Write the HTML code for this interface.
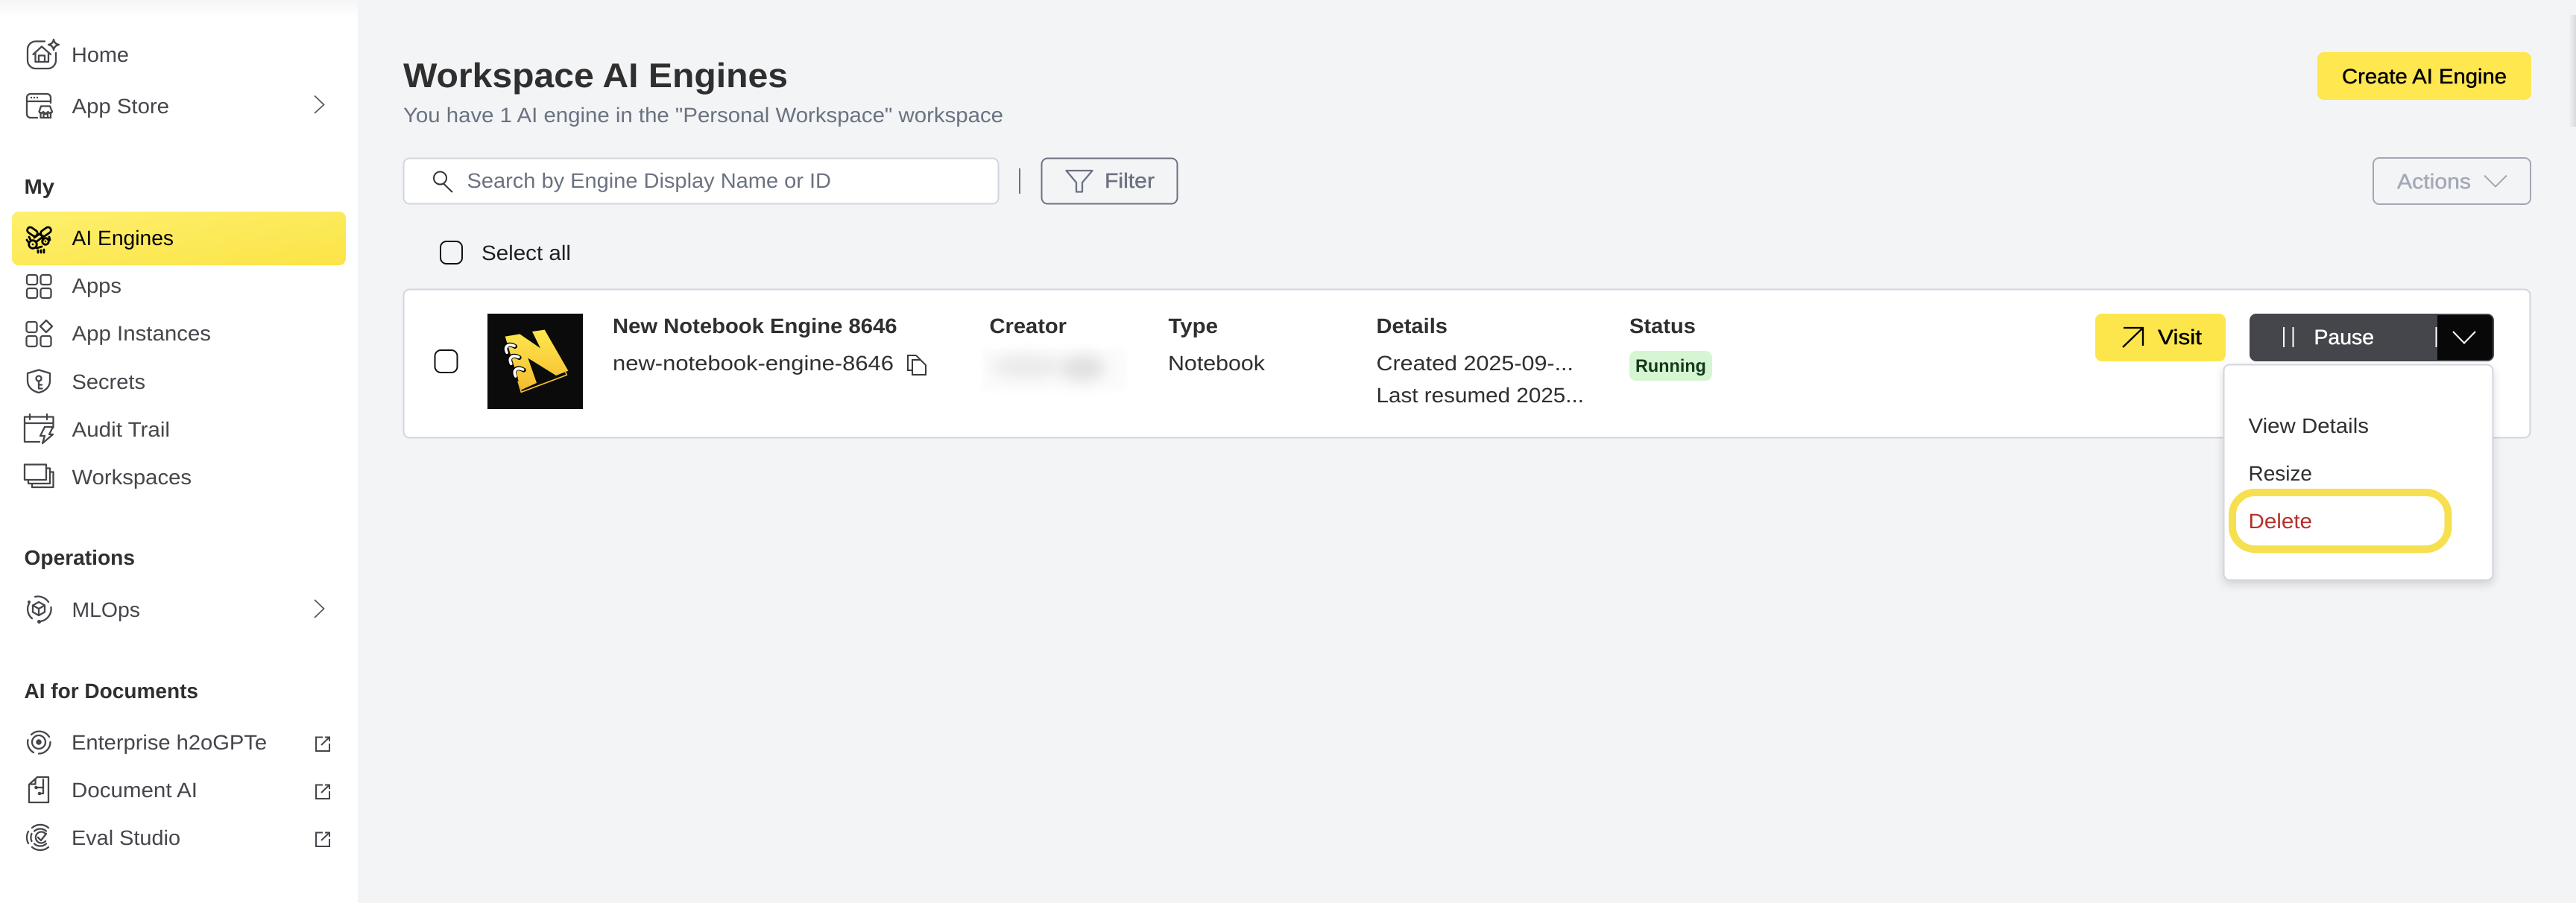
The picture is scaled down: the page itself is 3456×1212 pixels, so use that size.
<!DOCTYPE html>
<html lang="en">
<head>
<meta charset="utf-8">
<title>Workspace AI Engines</title>
<style>
html,body{margin:0;padding:0;width:3456px;height:1212px;overflow:hidden;background:#F3F4F6}
svg{display:block}
text{font-family:"Liberation Sans",sans-serif;font-size:28px;text-rendering:geometricPrecision}
.s{fill:#45464B}
.b{font-weight:700;fill:#2F2F2F}
.m{stroke-width:.45px}
.i{fill:none;stroke:#45464B;stroke-width:2.3;stroke-linejoin:round;stroke-linecap:round}
</style>
</head>
<body>
<svg xmlns="http://www.w3.org/2000/svg" width="3456" height="1212" viewBox="0 0 3456 1212">
<defs>
<linearGradient id="hl" x1="0" y1="0" x2="1" y2="1"><stop offset="0" stop-color="#FEF06E"/><stop offset="1" stop-color="#FBE447"/></linearGradient>
<linearGradient id="top" x1="0" y1="0" x2="0" y2="1"><stop offset="0" stop-color="#F5F5F5"/><stop offset="1" stop-color="#FFFFFF"/></linearGradient>
<linearGradient id="edge" x1="0" y1="0" x2="1" y2="0"><stop offset="0" stop-color="#F3F4F6"/><stop offset="1" stop-color="#DADADC"/></linearGradient>
<linearGradient id="nb" x1="0" y1="0" x2="0" y2="1"><stop offset="0" stop-color="#FFE84F"/><stop offset="1" stop-color="#F4BC2E"/></linearGradient>
<filter id="sh" x="-10%" y="-10%" width="120%" height="120%"><feDropShadow dx="0" dy="5" stdDeviation="6" flood-color="#000" flood-opacity=".14"/></filter>
</defs>

<!-- page -->
<rect width="3456" height="1212" fill="#F3F4F6"/>
<rect x="3446" y="20" width="10" height="150" fill="url(#edge)"/>

<!-- sidebar -->
<rect width="480" height="1212" fill="#FFFFFF"/>
<rect width="480" height="22" fill="url(#top)"/>

<!-- home -->
<g class="i">
<path d="M60,55.500 H48 a11,11 0 0 0 -11,11 V81 a11,11 0 0 0 11,11 H64 a11,11 0 0 0 11,-11 V71"/>
<path d="M72,53 Q73,59 79,60 Q73,61 72,67 Q71,61 65,60 Q71,59 72,53Z"/>
<path d="M44.500,73 L56,62.500 L68,73 M47.500,71 V83 H65 V71 M52,83 V74.500 H60 V83"/>
</g>
<text class="s" x="96" y="83" textLength="77" lengthAdjust="spacingAndGlyphs">Home</text>

<!-- app store -->
<g class="i">
<path d="M50,158 H41 a5,5 0 0 1 -5,-5 V131 a5,5 0 0 1 5,-5 H63 a5,5 0 0 1 5,5 V138 M36,136 H68"/>
<path d="M52.500,150 L55,142.500 H67 L70,150 Q67,154 64.500,150 Q61,154 58,150 Q55,154 52.500,150Z M54.500,151 V158 H68 V151 M58.500,158 V153 H64 V158"/>
</g>
<circle cx="42" cy="131" r="1.200" fill="#45464B"/><circle cx="46" cy="131" r="1.200" fill="#45464B"/><circle cx="50" cy="131" r="1.200" fill="#45464B"/>
<text class="s" x="96.500" y="152" textLength="130.500" lengthAdjust="spacingAndGlyphs">App Store</text>
<path d="M422,128.500 L434.500,140.500 L422,152" fill="none" stroke="#555" stroke-width="1.700"/>

<text class="b" x="32.500" y="260" textLength="40.500" lengthAdjust="spacingAndGlyphs">My</text>

<!-- AI engines -->
<rect x="16" y="284" width="448" height="72" rx="9" fill="url(#hl)"/>
<g fill="none" stroke="#000" stroke-width="2.800" stroke-linejoin="round" stroke-linecap="round">
<rect x="36" y="307" width="15" height="8" rx="4" transform="rotate(35 43.500 311)"/>
<rect x="54" y="307" width="15" height="8" rx="4" transform="rotate(-35 61.500 311)"/>
<path d="M46,319 L53,314 L58,318 M41,322 L39,318 M66,318 L67,322 M48,325 L56,319 L58,322 M49,333 L56,331 M38,325 L36,322"/>
<circle cx="44" cy="328" r="5.300"/>
<circle cx="61" cy="324" r="4.300"/>
<path d="M51,336 V339 M55,336 V339 M59,335 V339"/>
</g>
<circle cx="44" cy="328" r="1.300" fill="#000"/><circle cx="61" cy="324" r="1.200" fill="#000"/>
<text x="96.500" y="329" fill="#000" textLength="136.500" lengthAdjust="spacingAndGlyphs">AI Engines</text>

<!-- apps -->
<g class="i">
<rect x="36" y="369" width="14" height="13" rx="3"/><rect x="54.500" y="369" width="14" height="13" rx="3"/>
<rect x="36" y="387" width="14" height="13" rx="3"/><rect x="54.500" y="387" width="14" height="13" rx="3"/>
</g>
<text class="s" x="96.500" y="393" textLength="66.500" lengthAdjust="spacingAndGlyphs">Apps</text>

<!-- app instances -->
<g class="i">
<rect x="35.500" y="432" width="14" height="14" rx="3"/>
<path d="M62,430 L70,438 L62,446 L54,438 Z"/>
<rect x="35.500" y="451" width="14" height="14" rx="3"/><rect x="54.500" y="451" width="14" height="14" rx="3"/>
</g>
<text class="s" x="96.500" y="457" textLength="186.500" lengthAdjust="spacingAndGlyphs">App Instances</text>

<!-- secrets -->
<g class="i">
<path d="M52,496.500 L67,501 V511 C67,520 60,525 52,527 C44,525 37,520 37,511 V501 Z"/>
<circle cx="52" cy="508" r="3.500"/>
<path d="M52,511.500 V521.500 H56.500 M52,516.500 H56"/>
</g>
<text class="s" x="96.500" y="522" textLength="98.500" lengthAdjust="spacingAndGlyphs">Secrets</text>

<!-- audit trail -->
<g class="i" stroke-linecap="butt" stroke-linejoin="miter">
<path d="M53,593 H33 V559.500 H71.500 V568 H33 M71.500,568 V574 M40,556 V563 M63,556 V563"/>
<path d="M60,573 H71 L66,583 H71 L57,595 L60,585 H54 Z"/>
</g>
<text class="s" x="96.500" y="586" textLength="131.500" lengthAdjust="spacingAndGlyphs">Audit Trail</text>

<!-- workspaces -->
<g class="i" stroke-linecap="butt" stroke-linejoin="miter">
<rect x="33" y="623.500" width="29" height="20.500"/>
<path d="M38,644 V649 H67 V628.500 H62 M43,649 V654 H71.500 V633.500 H67"/>
</g>
<text class="s" x="96.500" y="650" textLength="160.500" lengthAdjust="spacingAndGlyphs">Workspaces</text>

<text class="b" x="32.500" y="758" textLength="148.500" lengthAdjust="spacingAndGlyphs">Operations</text>

<!-- mlops -->
<g class="i">
<path d="M39,810 A16,16 0 0 0 43,830 M47,801 A17,17 0 0 1 65,808 M68.500,815 A17,17 0 0 1 54,834"/>
<path d="M52,808 L60,812.500 V821.500 L52,826 L44,821.500 V812.500 Z M44,812.500 L52,817 L60,812.500 M52,817 V826"/>
</g>
<circle cx="52.500" cy="834.500" r="2.500" fill="#45464B"/>
<circle cx="39" cy="808" r="2" fill="#45464B"/>
<text class="s" x="96.500" y="828" textLength="91.500" lengthAdjust="spacingAndGlyphs">MLOps</text>
<path d="M422,805 L434.500,817 L422,829" fill="none" stroke="#555" stroke-width="1.700"/>

<text class="b" x="32.500" y="937" textLength="233.500" lengthAdjust="spacingAndGlyphs">AI for Documents</text>

<!-- enterprise -->
<g class="i">
<path d="M42,986 A15.500,15.500 0 0 1 66,989 M67.500,996 A15.500,15.500 0 0 1 52,1011.500 M45,1010 A15.500,15.500 0 0 1 37.500,993"/>
<circle cx="52" cy="996" r="9"/>
</g>
<circle cx="52" cy="996" r="3.800" fill="#45464B"/>
<text class="s" x="96" y="1006" textLength="262" lengthAdjust="spacingAndGlyphs">Enterprise h2oGPTe</text>

<!-- document ai -->
<g class="i" stroke-linecap="butt">
<path d="M50,1043 H65 V1077 H39 V1053 Z M47.500,1045.500 V1052.500 H41"/>
<path d="M49,1057 H58 V1046 M58,1057 V1065 H53"/>
</g>
<circle cx="48.500" cy="1057" r="2.300" fill="#45464B"/><circle cx="53" cy="1065" r="2.300" fill="#45464B"/>
<text class="s" x="96" y="1070" textLength="169" lengthAdjust="spacingAndGlyphs">Document AI</text>

<!-- eval studio -->
<g class="i" stroke-linecap="butt">
<path d="M43,1111 A17,17 0 0 1 65,1111 M46,1115.500 A12,12 0 0 1 62,1115.500 M43,1137 A17,17 0 0 0 65,1137 M46,1132.500 A12,12 0 0 0 62,1132.500"/>
<path d="M38,1116 A17,17 0 0 0 38,1132 M42.500,1119 A12,12 0 0 0 42.500,1129"/>
<path d="M61,1119 A7.500,7.500 0 1 0 61,1129"/>
<path d="M51,1124 L55,1128 L62,1119"/>
</g>
<text class="s" x="96" y="1134" textLength="146" lengthAdjust="spacingAndGlyphs">Eval Studio</text>

<!-- external link icons -->
<g fill="none" stroke="#45464B" stroke-width="2">
<path d="M433,989.500 H424 V1008 H442 V998 M431,1000 L442,989.500 M436,989.500 H442 V995"/>
<path d="M433,1053.500 H424 V1072 H442 V1062 M431,1064 L442,1053.500 M436,1053.500 H442 V1059"/>
<path d="M433,1117.500 H424 V1136 H442 V1126 M431,1128 L442,1117.500 M436,1117.500 H442 V1123"/>
</g>

<!-- header -->
<text x="541" y="117" font-weight="700" fill="#2F2F2F" style="font-size:46px" textLength="516" lengthAdjust="spacingAndGlyphs">Workspace AI Engines</text>
<text x="541" y="164" fill="#6B7280" textLength="805" lengthAdjust="spacingAndGlyphs">You have 1 AI engine in the "Personal Workspace" workspace</text>

<rect x="3109" y="70" width="287" height="64" rx="9" fill="#FEE74F"/>
<text class="m" x="3142" y="112" fill="#000" stroke="#000" textLength="221" lengthAdjust="spacingAndGlyphs">Create AI Engine</text>

<!-- toolbar -->
<rect x="541.500" y="212.500" width="798" height="61" rx="8" fill="#FFFFFF" stroke="#D3D5DE" stroke-width="2"/>
<circle cx="590.500" cy="239" r="8.500" fill="none" stroke="#333" stroke-width="2"/>
<path d="M595,246.500 L607,258" fill="none" stroke="#333" stroke-width="2"/>
<text x="626.500" y="252" fill="#6B7280" textLength="488.500" lengthAdjust="spacingAndGlyphs">Search by Engine Display Name or ID</text>
<rect x="1367" y="226" width="2" height="34" fill="#6B7280"/>
<rect x="1397.500" y="212.500" width="182" height="61" rx="8" fill="none" stroke="#6B7280" stroke-width="2"/>
<path d="M1430.500,229 H1465.500 L1452,245 V257.500 H1444 V245 Z" fill="none" stroke="#6B7280" stroke-width="2.300" stroke-linejoin="round"/>
<text class="m" x="1482" y="252" fill="#6B7280" stroke="#6B7280" textLength="67" lengthAdjust="spacingAndGlyphs">Filter</text>

<rect x="3184" y="212" width="211" height="62" rx="8" fill="none" stroke="#A3A8B4" stroke-width="2"/>
<text class="m" x="3216" y="253" fill="#A3A8B4" stroke="#A3A8B4" textLength="99" lengthAdjust="spacingAndGlyphs">Actions</text>
<path d="M3333,235.500 L3348,250.500 L3363,235.500" fill="none" stroke="#A8A8A8" stroke-width="2"/>

<rect x="591" y="324" width="29" height="30" rx="8" fill="none" stroke="#111" stroke-width="2"/>
<text x="646" y="349" fill="#1F1F1F" textLength="120" lengthAdjust="spacingAndGlyphs">Select all</text>

<!-- card -->
<rect x="541.500" y="388.500" width="2853" height="199" rx="8" fill="#FFFFFF" stroke="#D3D5DE" stroke-width="2"/>
<rect x="583.500" y="470" width="30" height="30" rx="8" fill="#FFFFFF" stroke="#111" stroke-width="2"/>

<rect x="654" y="421" width="128" height="128" fill="#0B0B0B"/>
<g transform="translate(640 410) scale(.33333)">
<path d="M165,305 L178,349 L361,280 L356,268" fill="none" stroke="#F5C030" stroke-width="5"/>
<path d="M113,125 L172,115 L255,172 L222,105 L272,98 L367,263 L318,282 L205,212 L240,312 L178,340 Z" fill="url(#nb)"/>
<g fill="none" stroke-linecap="round">
<path d="M120,195 C105,165 125,148 153,165" stroke="#000" stroke-width="18"/>
<path d="M120,190 C108,165 125,152 150,163" stroke="#FFF" stroke-width="11"/>
<path d="M137,240 C122,210 142,193 170,210" stroke="#000" stroke-width="18"/>
<path d="M137,235 C125,210 142,197 167,208" stroke="#FFF" stroke-width="11"/>
<path d="M155,290 C140,260 160,243 188,260" stroke="#000" stroke-width="18"/>
<path d="M155,285 C143,260 160,247 185,258" stroke="#FFF" stroke-width="11"/>
</g>
</g>

<text class="b" x="822" y="447" textLength="381.500" lengthAdjust="spacingAndGlyphs">New Notebook Engine 8646</text>
<text x="822" y="497" fill="#2F2F2F" textLength="377" lengthAdjust="spacingAndGlyphs">new-notebook-engine-8646</text>
<path d="M1229,477 H1218 V497 H1224 M1224,483 H1235 L1242,490 V503 H1224 Z M1229,477 L1235,483" fill="none" stroke="#3A3A3A" stroke-width="2"/>

<text class="b" x="1327.500" y="447" textLength="103.500" lengthAdjust="spacingAndGlyphs">Creator</text>
<rect x="1318" y="468" width="192" height="56" fill="#FBFBFB" style="filter:blur(4px)"/>
<ellipse cx="1378" cy="492" rx="46" ry="15" fill="#EAEAEA" style="filter:blur(9px)"/>
<ellipse cx="1452" cy="494" rx="30" ry="17" fill="#E0E0E0" style="filter:blur(9px)"/>

<text class="b" x="1567.500" y="447" textLength="66.500" lengthAdjust="spacingAndGlyphs">Type</text>
<text x="1567" y="497" fill="#2F2F2F" textLength="130" lengthAdjust="spacingAndGlyphs">Notebook</text>

<text class="b" x="1846.500" y="447" textLength="95.500" lengthAdjust="spacingAndGlyphs">Details</text>
<text x="1846.500" y="497" fill="#2F2F2F" textLength="264.500" lengthAdjust="spacingAndGlyphs">Created 2025-09-...</text>
<text x="1846.500" y="540" fill="#2F2F2F" textLength="278.500" lengthAdjust="spacingAndGlyphs">Last resumed 2025...</text>

<text class="b" x="2186" y="447" textLength="89" lengthAdjust="spacingAndGlyphs">Status</text>
<rect x="2186" y="471" width="111" height="40" rx="9" fill="#D6F5D2"/>
<text x="2194" y="499" font-weight="700" fill="#14381A" style="font-size:24px" textLength="95" lengthAdjust="spacingAndGlyphs">Running</text>

<!-- visit -->
<rect x="2811" y="421" width="175" height="64" rx="9" fill="#FCE64C"/>
<path d="M2849,440 H2875 V464 M2875,440 L2848,466" fill="none" stroke="#000" stroke-width="2.300"/>
<text class="m" x="2895" y="462" fill="#000" stroke="#000" textLength="59" lengthAdjust="spacingAndGlyphs">Visit</text>

<!-- pause -->
<rect x="3018" y="421" width="328" height="64" rx="9" fill="#45464B"/>
<path d="M3270,423 H3338 a6,6 0 0 1 6,6 V477 a6,6 0 0 1 -6,6 H3270 Z" fill="#080808"/>
<rect x="3063" y="439" width="2" height="27" fill="#FFF"/>
<rect x="3075.500" y="439" width="2" height="27" fill="#FFF"/>
<text class="m" x="3104.500" y="462" fill="#FFF" stroke="#FFF" textLength="80.500" lengthAdjust="spacingAndGlyphs">Pause</text>
<rect x="3267.500" y="439" width="2" height="27" fill="#FFF"/>
<path d="M3291,445 L3306,460.500 L3321,445" fill="none" stroke="#FFF" stroke-width="2"/>

<!-- menu -->
<rect x="2983.500" y="489.500" width="361" height="289" rx="8" fill="#FFFFFF" stroke="#D3D5DE" stroke-width="2" filter="url(#sh)"/>
<text x="3016.500" y="581" fill="#2F2F2F" textLength="161.500" lengthAdjust="spacingAndGlyphs">View Details</text>
<text x="3016.500" y="645" fill="#2F2F2F" textLength="85.500" lengthAdjust="spacingAndGlyphs">Resize</text>
<text x="3016.500" y="709" fill="#B5302A" textLength="85.500" lengthAdjust="spacingAndGlyphs">Delete</text>
<rect x="2995" y="661" width="289.500" height="76" rx="30" fill="none" stroke="#F7E04F" stroke-width="10"/>
</svg>
</body>
</html>
